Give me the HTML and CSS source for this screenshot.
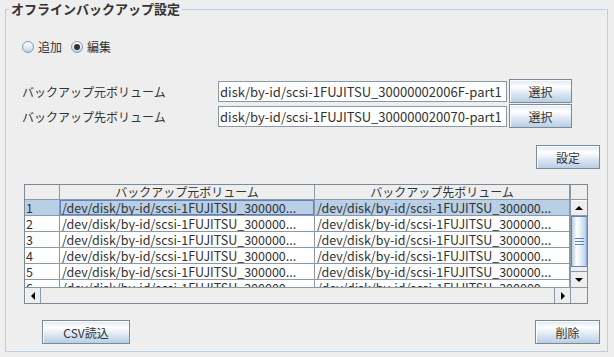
FILE: index.html
```html
<!DOCTYPE html>
<html>
<head>
    <title>オフラインバックアップ設定</title>
    <link rel="stylesheet" href="styles.css">
</head>
<body>
    <div class="panel">
        <div class="panel-title">オフラインバックアップ設定</div>

        <div class="radio-row">
            <div class="radio"><span class="radio-dot"></span>追加</div>
            <div class="radio radio-on"><span class="radio-dot"></span>編集</div>
        </div>

        <div class="form-row">
            <div class="form-label">バックアップ元ボリューム</div>
            <div class="field">disk/by-id/scsi-1FUJITSU_30000002006F-part1</div>
            <div class="button button-select">選択</div>
        </div>
        <div class="form-row form-row-next">
            <div class="form-label">バックアップ先ボリューム</div>
            <div class="field">disk/by-id/scsi-1FUJITSU_300000020070-part1</div>
            <div class="button button-select">選択</div>
        </div>

        <div class="set-row">
            <div class="button button-set">設定</div>
        </div>

        <div class="table">
            <div class="table-view">
                <div class="table-head">
                    <div class="cell cell-num"></div>
                    <div class="cell cell-head">バックアップ元ボリューム</div>
                    <div class="cell cell-head">バックアップ先ボリューム</div>
                </div>
                <div class="table-row row-selected">
                    <div class="cell cell-num">1</div>
                    <div class="cell cell-focus">/dev/disk/by-id/scsi-1FUJITSU_300000...</div>
                    <div class="cell">/dev/disk/by-id/scsi-1FUJITSU_300000...</div>
                </div>
                <div class="table-row">
                    <div class="cell cell-num">2</div>
                    <div class="cell">/dev/disk/by-id/scsi-1FUJITSU_300000...</div>
                    <div class="cell">/dev/disk/by-id/scsi-1FUJITSU_300000...</div>
                </div>
                <div class="table-row">
                    <div class="cell cell-num">3</div>
                    <div class="cell">/dev/disk/by-id/scsi-1FUJITSU_300000...</div>
                    <div class="cell">/dev/disk/by-id/scsi-1FUJITSU_300000...</div>
                </div>
                <div class="table-row">
                    <div class="cell cell-num">4</div>
                    <div class="cell">/dev/disk/by-id/scsi-1FUJITSU_300000...</div>
                    <div class="cell">/dev/disk/by-id/scsi-1FUJITSU_300000...</div>
                </div>
                <div class="table-row">
                    <div class="cell cell-num">5</div>
                    <div class="cell">/dev/disk/by-id/scsi-1FUJITSU_300000...</div>
                    <div class="cell">/dev/disk/by-id/scsi-1FUJITSU_300000...</div>
                </div>
                <div class="table-row">
                    <div class="cell cell-num">6</div>
                    <div class="cell">/dev/disk/by-id/scsi-1FUJITSU_300000...</div>
                    <div class="cell">/dev/disk/by-id/scsi-1FUJITSU_300000...</div>
                </div>
            </div>

            <div class="vbar">
                <div class="vbar-corner"></div>
                <div class="vbar-body">
                    <div class="arrow arrow-v"><span class="tri tri-up"></span></div>
                    <div class="vbar-track">
                        <div class="thumb"><span class="grip"></span></div>
                    </div>
                    <div class="arrow arrow-v"><span class="tri tri-down"></span></div>
                </div>
            </div>

            <div class="hbar">
                <div class="arrow arrow-h"><span class="tri tri-left"></span></div>
                <div class="hbar-track"></div>
                <div class="arrow arrow-h"><span class="tri tri-right"></span></div>
            </div>
            <div class="corner"></div>
        </div>

        <div class="bottom-row">
            <div class="button button-csv">CSV読込</div>
            <div class="button button-delete">削除</div>
        </div>
    </div>
</body>
</html>
```

FILE: styles.css
```css
body {
    margin: 0;
    width: 614px;
    height: 357px;
    overflow: hidden;
    background-color: #eeeeee;
    font-family: "Noto Sans CJK JP", sans-serif;
    font-size: 12px;
    color: #333;
}

.panel {
    position: relative;
    margin: 9px 0 0 5px;
    width: 603px;
    height: 343px;
    box-sizing: border-box;
    border: 1px solid #b8cfe5;
}

.panel-title {
    position: absolute;
    top: -9px;
    left: 3px;
    padding: 0 2px;
    background-color: #eeeeee;
    font-size: 13px;
    font-weight: bold;
    line-height: 16px;
}

/* radio buttons */
.radio-row {
    display: flex;
    align-items: center;
    height: 14px;
    margin-top: 30px;
    padding-left: 16px;
}

.radio {
    display: flex;
    align-items: center;
    gap: 4px;
    margin-right: 9px;
    line-height: 14px;
}

.radio-dot {
    position: relative;
    width: 10px;
    height: 10px;
    border: 1px solid #8a99a8;
    border-radius: 50%;
    background: linear-gradient(#ffffff, #dde8f3 60%, #b8cfe5);
}

.radio-on .radio-dot::after {
    content: "";
    position: absolute;
    left: 2px;
    top: 2px;
    width: 6px;
    height: 6px;
    border-radius: 50%;
    background-color: #333;
}

/* volume rows */
.form-row {
    display: flex;
    align-items: center;
    height: 24px;
    margin-top: 25px;
    padding-left: 16px;
}

.form-row-next {
    margin-top: 1px;
}

.form-label {
    width: 196px;
}

.field {
    width: 289px;
    height: 21px;
    box-sizing: border-box;
    border: 1px solid #8a99a8;
    background-color: #fff;
    padding-left: 1px;
    line-height: 19px;
    font-size: 13px;
    white-space: nowrap;
    overflow: hidden;
}

.button {
    display: flex;
    align-items: center;
    justify-content: center;
    height: 24px;
    box-sizing: border-box;
    border: 1px solid #7a8a99;
    box-shadow: inset 1px 1px 0 #fff;
    background: linear-gradient(#dde8f3 0%, #ffffff 30%, #dde8f3 60%, #b8cfe5 100%);
    color: #333;
}

.button-select {
    width: 63px;
    margin-left: 2px;
}

.set-row {
    display: flex;
    justify-content: flex-end;
    margin-top: 17px;
    padding-right: 7px;
}

.button-set {
    width: 64px;
}

/* table */
.table {
    display: grid;
    grid-template-columns: 545px 17px;
    grid-template-rows: 102px 16px;
    width: 564px;
    height: 120px;
    box-sizing: border-box;
    margin: 15px 0 0 18px;
    border: 1px solid #7a8a99;
}

.table-view {
    overflow: hidden;
    background-color: #fff;
}

.table-head,
.table-row {
    display: flex;
}

.cell {
    box-sizing: border-box;
    width: 255px;
    height: 16px;
    padding-left: 2px;
    border-right: 1px solid #8a99a8;
    border-bottom: 1px solid #8a99a8;
    font-size: 12.5px;
    line-height: 15px;
    white-space: nowrap;
    overflow: hidden;
}

.table-head .cell {
    height: 15px;
    line-height: 14px;
    background-color: #eeeeee;
    font-size: 12px;
}

.cell-head {
    text-align: center;
    padding-left: 0;
}

.cell-num {
    width: 35px;
    padding-left: 1px;
}

.row-selected .cell {
    background-color: #b8cfe5;
}

.row-selected .cell-focus {
    box-shadow: inset 0 0 0 1px #6382bf;
}

/* scrollbars */
.vbar {
    display: flex;
    flex-direction: column;
    border-left: 1px solid #8a99a8;
}

.vbar-corner {
    height: 15px;
    box-sizing: border-box;
    border-bottom: 1px solid #8a99a8;
    background-color: #eeeeee;
}

.vbar-body {
    flex: 1;
    display: flex;
    flex-direction: column;
    background-color: #eeeeee;
}

.arrow {
    display: flex;
    align-items: center;
    justify-content: center;
    box-sizing: border-box;
    background-color: #eeeeee;
}

.arrow-v {
    height: 16px;
    border-top: 1px solid #fff;
    border-bottom: 1px solid #8a99a8;
}

.arrow-v + .vbar-track + .arrow-v {
    border-top: 1px solid #8a99a8;
    border-bottom: none;
}

.vbar-track {
    flex: 1;
    padding: 0 0 4px 0;
}

.thumb {
    display: flex;
    align-items: center;
    justify-content: center;
    height: 51px;
    box-sizing: border-box;
    border: 1px solid #6382bf;
    border-right-color: #8aa4d1;
    background: linear-gradient(to right, #b8cfe5, #ffffff 35%, #dde8f3 70%, #b8cfe5);
}

.grip {
    width: 9px;
    height: 5px;
    border-top: 1px solid #6382bf;
    border-bottom: 1px solid #6382bf;
    background: linear-gradient(transparent 2px, #6382bf 2px, #6382bf 3px, transparent 3px);
}

.tri {
    width: 0;
    height: 0;
    border: 4px solid transparent;
}

.tri-up {
    border-bottom: 4px solid #000;
    border-top-width: 0;
}

.tri-down {
    border-top: 4px solid #000;
    border-bottom-width: 0;
}

.tri-left {
    border-right: 4px solid #000;
    border-left-width: 0;
}

.tri-right {
    border-left: 4px solid #000;
    border-right-width: 0;
}

.hbar {
    display: flex;
    border-top: 1px solid #8a99a8;
    background-color: #eeeeee;
}

.arrow-h {
    width: 16px;
    border-right: 1px solid #8a99a8;
    border-left: 1px solid #fff;
}

.hbar-track {
    flex: 1;
}

.hbar-track + .arrow-h {
    border-left: 1px solid #8a99a8;
    border-right: none;
}

.corner {
    border-top: 1px solid #8a99a8;
    border-left: 1px solid #8a99a8;
    background-color: #eeeeee;
}

/* bottom buttons */
.bottom-row {
    display: flex;
    justify-content: space-between;
    margin-top: 16px;
    padding: 0 7px 0 36px;
}

.button-csv {
    width: 88px;
}

.button-delete {
    width: 65px;
}
```
